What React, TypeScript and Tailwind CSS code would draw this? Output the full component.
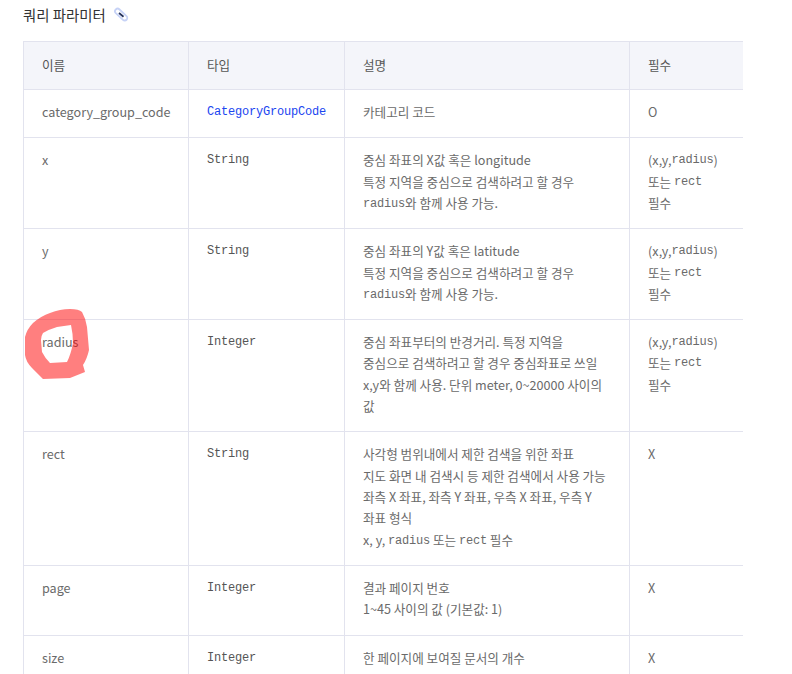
const sans = "font-['Noto_Sans_CJK_KR','Noto_Sans',sans-serif]";

function Mono({ children, className = "align-[2px]" }: { children: React.ReactNode; className?: string }) {
  return <span className={`font-['Liberation_Mono','Noto_Sans_CJK_KR',monospace] text-[12px] leading-none tracking-[-0.2px] ${className}`}>{children}</span>;
}

// inline code inside a description line sits a little lower than in the type column
function Code({ children }: { children: React.ReactNode }) {
  return <Mono className="align-[1px]">{children}</Mono>;
}

const both = [<>(x,y,<Mono>radius</Mono>)</>, <>또는 <Mono>rect</Mono></>, "필수"];

const rows: { name: string; type: string; desc: React.ReactNode[]; req: React.ReactNode[]; link?: boolean }[] = [
  { name: "category_group_code", type: "CategoryGroupCode", link: true, desc: ["카테고리 코드"], req: ["O"] },
  {
    name: "x",
    type: "String",
    desc: ["중심 좌표의 X값 혹은 longitude", "특정 지역을 중심으로 검색하려고 할 경우", <><Code>radius</Code>와 함께 사용 가능.</>],
    req: both,
  },
  {
    name: "y",
    type: "String",
    desc: ["중심 좌표의 Y값 혹은 latitude", "특정 지역을 중심으로 검색하려고 할 경우", <><Code>radius</Code>와 함께 사용 가능.</>],
    req: both,
  },
  {
    name: "radius",
    type: "Integer",
    desc: ["중심 좌표부터의 반경거리. 특정 지역을", "중심으로 검색하려고 할 경우 중심좌표로 쓰일", <>x,y와 함께 사용. 단위 meter, 0~20000 사이의</>, "값"],
    req: both,
  },
  {
    name: "rect",
    type: "String",
    desc: [
      "사각형 범위내에서 제한 검색을 위한 좌표",
      "지도 화면 내 검색시 등 제한 검색에서 사용 가능",
      "좌측 X 좌표, 좌측 Y 좌표, 우측 X 좌표, 우측 Y",
      "좌표 형식",
      <>x, y, <Code>radius</Code> 또는 <Code>rect</Code> 필수</>,
    ],
    req: ["X"],
  },
  { name: "page", type: "Integer", desc: ["결과 페이지 번호", "1~45 사이의 값 (기본값: 1)"], req: ["X"] },
  { name: "size", type: "Integer", desc: ["한 페이지에 보여질 문서의 개수"], req: ["X"] },
];

function Lines({ items }: { items: React.ReactNode[] }) {
  return (
    <>
      {items.map((item, i) => (
        <div key={i}>{item}</div>
      ))}
    </>
  );
}

export default function App() {
  const td = "border border-[#e2e3ee] px-[18px] pt-[11px] pb-[14.9px] align-top";
  return (
    <div className={`relative h-[674px] w-[792px] overflow-hidden bg-white ${sans} text-[12.6px] leading-[21.35px] text-[#6a6a6a]`}>
      <div className="pl-[23px] pt-[4px]">
        <h2 className="flex items-center gap-[7px] text-[14.4px] font-normal leading-[21px] text-[#333]">
          쿼리 파라미터
          <svg width="16" height="16" viewBox="0 0 16 16" fill="none">
            <path d="M6.5 2.5 L13.5 9.2 A2.5 2.5 0 0 1 10 12.8 L2.8 6.2 A2.5 2.5 0 0 1 6.5 2.5 Z" stroke="#c6d2f6" strokeWidth="1.8" />
            <path d="M6 6 L10.5 9.8" stroke="#24325c" strokeWidth="1.8" />
          </svg>
        </h2>
      </div>
      <div className="ml-[23px] mt-[16px] w-[720px] overflow-hidden">
        <table className="w-[730px] table-fixed border-collapse">
          <colgroup>
            <col className="w-[165px]" />
            <col className="w-[156px]" />
            <col className="w-[285px]" />
            <col className="w-[124px]" />
          </colgroup>
          <thead>
            <tr className="h-[48px] bg-[#f4f5fa] text-left text-[#555]">
              {["이름", "타입", "설명", "필수"].map((h) => (
                <th key={h} className="border border-[#e2e3ee] px-[18px] pt-0 pb-[2px] align-middle font-normal">{h}</th>
              ))}
            </tr>
          </thead>
          <tbody>
            {rows.map((r) => (
              <tr key={r.name}>
                <td className={td}>{r.name}</td>
                <td className={td}>
                  <Mono className={r.link ? "align-[2px] text-[#1a45f0]" : "align-[2px] text-[#555]"}>{r.type}</Mono>
                </td>
                <td className={td}><Lines items={r.desc} /></td>
                <td className={td}><Lines items={r.req} /></td>
              </tr>
            ))}
          </tbody>
        </table>
      </div>
      <svg className="pointer-events-none absolute left-[20px] top-[304px]" width="74" height="80" viewBox="20 304 74 80">
        <path
          fillRule="evenodd"
          fill="#ff0000"
          fillOpacity="0.5"
          d="M25 337 Q27 329 33 323 Q41 316 50 313 Q60 309 70 309 Q79 309 82 312 Q86 319 87 327 L89 350 Q87 359 83 365 L85 372 L70 378 L43 379 L32 368 Q26 362 25 355 Z M41 340 Q41 336 43 333 Q50 329 57 327 L71 325 Q73 334 73 343 Q71 354 67 362 L50 363 Q45 358 42 352 Z"
        />
      </svg>
    </div>
  );
}
